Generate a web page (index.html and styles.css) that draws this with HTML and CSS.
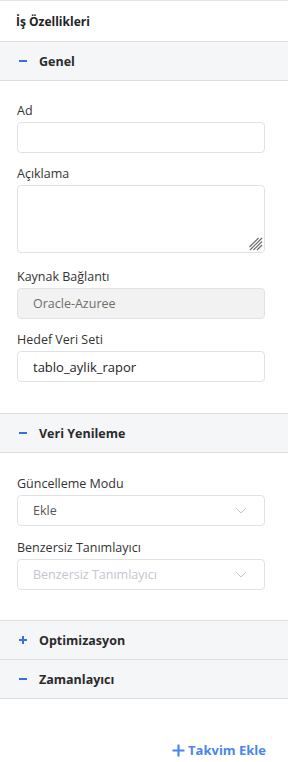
FILE: index.html
```html
<!DOCTYPE html>
<html lang="tr">
<head>
    <meta charset="UTF-8">
    <meta name="viewport" content="width=device-width, initial-scale=1.0">
    <title>İş Özellikleri</title>
    <link rel="stylesheet" href="styles.css">
</head>
<body>
    <div class="panel">
        <div class="panel-title">İş Özellikleri</div>

        <div class="section-head"><span class="toggle minus"></span>Genel</div>
        <div class="section-body">
            <div class="field">
                <label>Ad</label>
                <input type="text" class="input">
            </div>
            <div class="field">
                <label>Açıklama</label>
                <div class="area-wrap">
                    <textarea class="input area"></textarea>
                    <svg class="grip" width="15" height="15" viewBox="0 0 15 15"><path d="M14 2L2 14M14 5.5L5.5 14M14 9L9 14M10.5 2L1.5 11" stroke="#666" stroke-width="1.1"/></svg>
                </div>
            </div>
            <div class="field">
                <label>Kaynak Bağlantı</label>
                <div class="input disabled">Oracle-Azuree</div>
            </div>
            <div class="field">
                <label>Hedef Veri Seti</label>
                <div class="input filled">tablo_aylik_rapor</div>
            </div>
        </div>

        <div class="section-head"><span class="toggle minus"></span>Veri Yenileme</div>
        <div class="section-body wide">
            <div class="field">
                <label>Güncelleme Modu</label>
                <div class="input select">Ekle
                    <svg class="chev" width="12" height="7" viewBox="0 0 12 7"><path d="M1 1l5 5 5-5" fill="none" stroke="#c7c9cf" stroke-width="1"/></svg>
                </div>
            </div>
            <div class="field">
                <label>Benzersiz Tanımlayıcı</label>
                <div class="input select placeholder">Benzersiz Tanımlayıcı
                    <svg class="chev" width="12" height="7" viewBox="0 0 12 7"><path d="M1 1l5 5 5-5" fill="none" stroke="#c7c9cf" stroke-width="1"/></svg>
                </div>
            </div>
        </div>

        <div class="section-head"><span class="toggle plus"></span>Optimizasyon</div>
        <div class="section-head"><span class="toggle minus"></span>Zamanlayıcı</div>

        <div class="actions">
            <a class="add-link" href="#"><svg width="13" height="13" viewBox="0 0 13 13"><path d="M6.5 0.5v12M0.5 6.5h12" stroke="#4a86f0" stroke-width="2.2"/></svg>Takvim Ekle</a>
        </div>
    </div>
</body>
</html>
```

FILE: styles.css
```css
body {
    margin: 0;
    font-family: 'Open Sans', 'Noto Sans', sans-serif;
    background: #fff;
    color: #2b2b2b;
}
.panel { border-top: 1px solid #e3e4e6; padding-top: 1px; }
.panel-title { height: 39px; line-height: 39px; padding-left: 16px; font-size: 12px; font-weight: 700; color: #222; border-bottom: 1px solid #dedfe2; }
.section-head { display: flex; align-items: center; height: 38px; padding-left: 19px; background: #f5f6f8; border-bottom: 1px solid #dcdde0; font-size: 12.5px; font-weight: 700; color: #2a2a2a; }
.section-body + .section-head { border-top: 1px solid #dcdde0; }
.toggle { position: relative; width: 8px; height: 8px; margin-right: 12px; }
.toggle::before { content: ''; position: absolute; left: 0; top: 3px; width: 8px; height: 1.5px; background: #3b6cf0; }
.toggle.plus::after { content: ''; position: absolute; left: 3.3px; top: 0; width: 1.5px; height: 8px; background: #3b6cf0; }
.section-body { padding: 23px 23px 31px 17px; display: flex; flex-direction: column; gap: 14px; }
.section-body.wide { padding-top: 24px; gap: 15px; padding-bottom: 30px; }
.field label { display: block; font-size: 12.5px; color: #333; margin-bottom: 4px; line-height: 14px; }
.input { box-sizing: border-box; display: flex; align-items: center; width: 100%; height: 31px; border: 1px solid #e1e2e6; border-radius: 4px; padding: 0 15px; font-family: inherit; font-size: 12.5px; background: #fff; color: #333; }
.area-wrap { position: relative; margin-bottom: 3px; }
.area { height: 68px; resize: none; display: block; }
.grip { position: absolute; right: 2px; bottom: 2px; }
.disabled { background: #f2f2f2; color: #6e6e6e; }
.filled { color: #1e1e1e; font-size: 13px; }
.select { justify-content: space-between; color: #555; }
.placeholder { color: #c2c6cf; }
.chev { margin-right: 2px; }
.actions { display: flex; justify-content: flex-end; padding: 43px 22px 0 0; }
.add-link { display: flex; align-items: center; gap: 3px; color: #4a86f0; font-weight: 700; font-size: 13px; line-height: 16px; text-decoration: none; }
```
